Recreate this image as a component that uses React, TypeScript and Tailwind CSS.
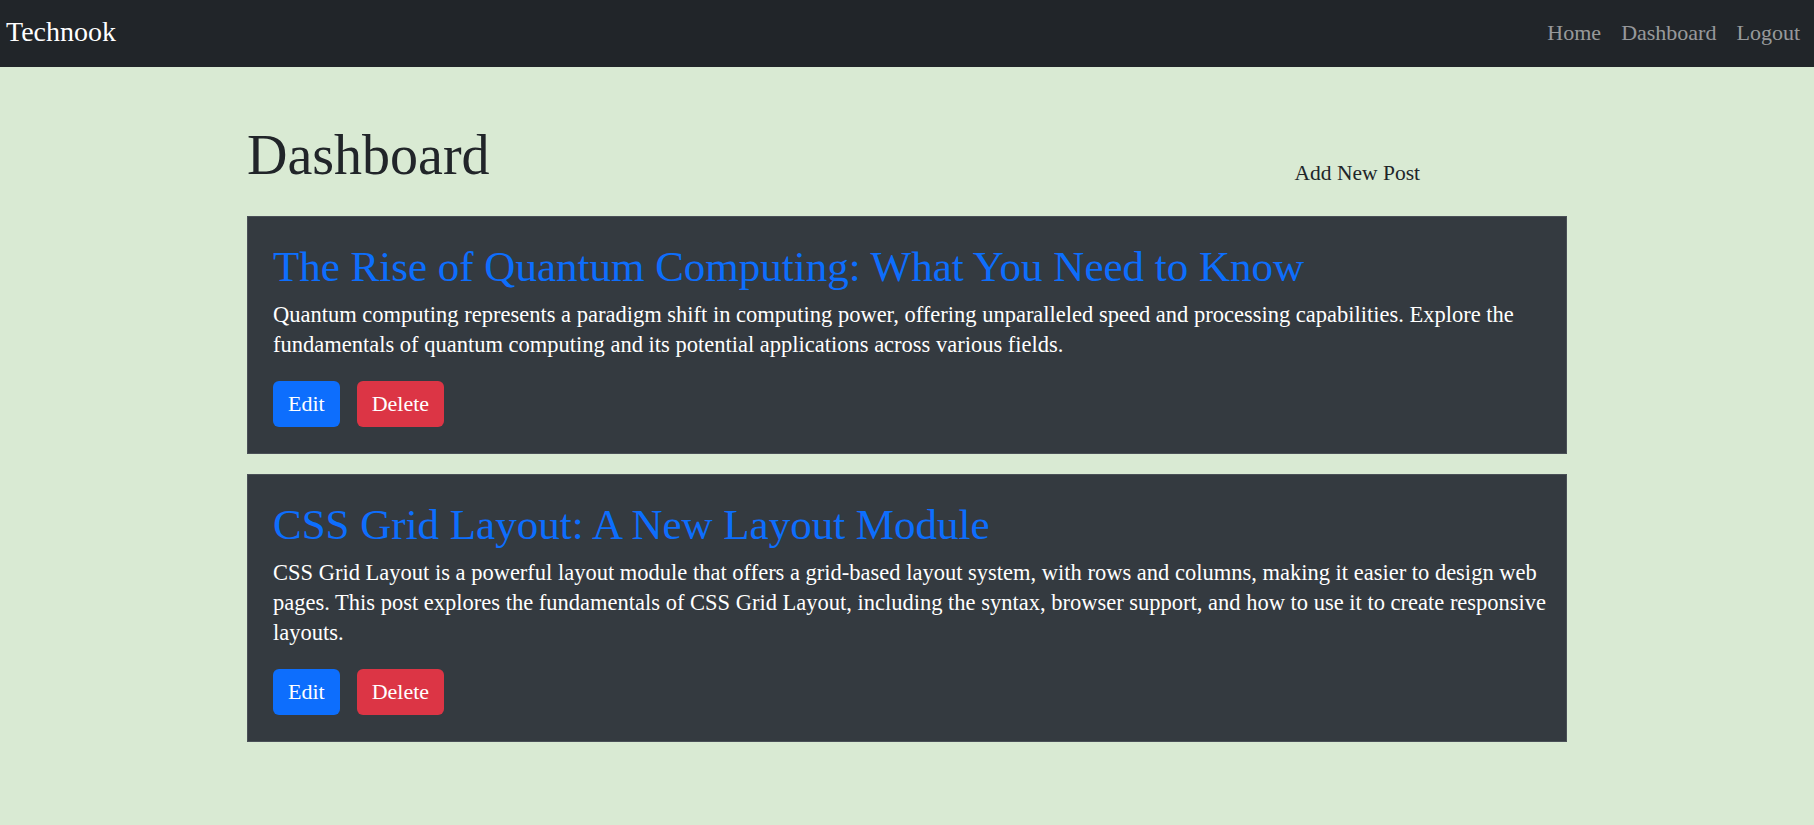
import React from "react";

const serif = { fontFamily: '"Liberation Serif", "Times New Roman", serif' };

type Post = { title: string; body: string };

const posts: Post[] = [
  {
    title: "The Rise of Quantum Computing: What You Need to Know",
    body: "Quantum computing represents a paradigm shift in computing power, offering unparalleled speed and processing capabilities. Explore the fundamentals of quantum computing and its potential applications across various fields.",
  },
  {
    title: "CSS Grid Layout: A New Layout Module",
    body: "CSS Grid Layout is a powerful layout module that offers a grid-based layout system, with rows and columns, making it easier to design web pages. This post explores the fundamentals of CSS Grid Layout, including the syntax, browser support, and how to use it to create responsive layouts.",
  },
];

function PostCard({ post }: { post: Post }) {
  return (
    <div className="border border-[#4a5057] bg-[#343a40] pl-[25px] pr-[16px] pt-[26px] pb-[26px]">
      <h2 className="text-[43px] leading-[48px] text-[#0d6efd] mb-[9px]">{post.title}</h2>
      <p className="text-[22.5px] leading-[30px] text-white">{post.body}</p>
      <div className="mt-[21px] flex gap-[17px]">
        <button className="rounded-md bg-[#0d6efd] px-[15px] py-2 text-[22px] leading-[30px] text-white">Edit</button>
        <button className="rounded-md bg-[#dc3545] px-[15px] py-2 text-[22px] leading-[30px] text-white">Delete</button>
      </div>
    </div>
  );
}

export default function App() {
  return (
    <div style={serif} className="min-h-[825px] bg-[#d9ead3]">
      <nav className="flex h-[67px] items-center justify-between bg-[#212529] pl-[6px] pr-[14px]">
        <span className="mb-[4px] text-[28px] leading-none text-white">Technook</span>
        <div className="mb-[2px] flex gap-[20px] text-[22px] text-[rgba(255,255,255,0.55)]">
          <span>Home</span>
          <span>Dashboard</span>
          <span>Logout</span>
        </div>
      </nav>
      <main className="mx-auto w-[1320px] pt-[55px]">
        <div className="flex items-start justify-between">
          <h1 className="text-[56px] leading-[1.2] text-[#212529]">Dashboard</h1>
          <span className="mt-[36px] mr-[147px] text-[21.5px] leading-[30px] text-[#212529]">Add New Post</span>
        </div>
        <div className="mt-[27px] flex flex-col gap-[20px]">
          {posts.map((p) => (
            <PostCard key={p.title} post={p} />
          ))}
        </div>
      </main>
    </div>
  );
}
